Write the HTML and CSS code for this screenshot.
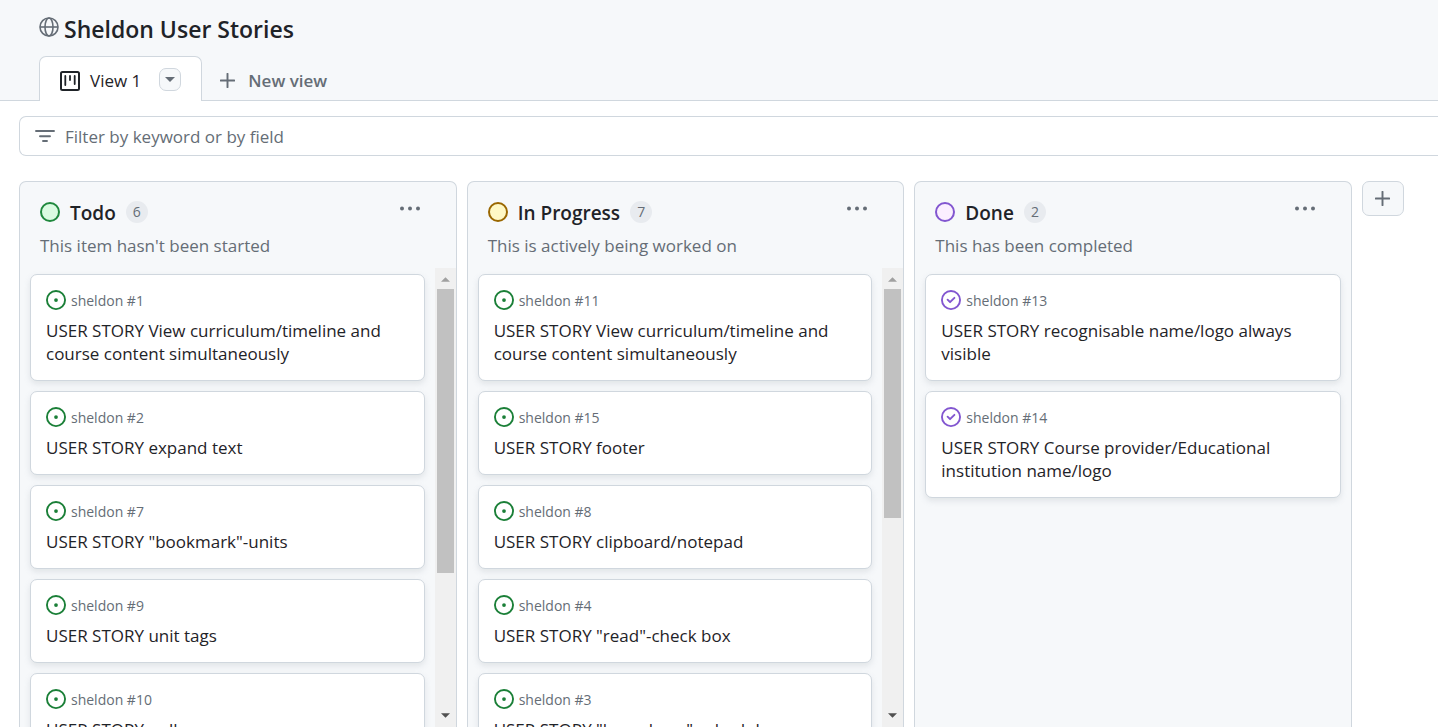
FILE: index.html
```html
<!DOCTYPE html>
<html lang="en">
<head>
<meta charset="utf-8">
<title>Sheldon User Stories</title>
<link rel="stylesheet" href="styles.css">
</head>
<body>
<svg class="sprite" aria-hidden="true">
  <symbol id="open" viewBox="0 0 16 16"><path d="M8 9.5a1.5 1.5 0 1 0 0-3 1.5 1.5 0 0 0 0 3Z"/><path d="M8 0a8 8 0 1 1 0 16A8 8 0 0 1 8 0ZM1.5 8a6.500 6.500 0 1 0 13 0 6.500 6.500 0 0 0-13 0Z"/></symbol>
  <symbol id="closed" viewBox="0 0 16 16"><path d="M11.280 6.780a.75.75 0 0 0-1.060-1.060L7.250 8.690 5.780 7.220a.75.75 0 0 0-1.060 1.060l2 2a.75.75 0 0 0 1.060 0l3.500-3.500Z"/><path d="M16 8A8 8 0 1 1 0 8a8 8 0 0 1 16 0Zm-1.500 0a6.500 6.500 0 1 0-13 0 6.500 6.500 0 0 0 13 0Z"/></symbol>
  <symbol id="dots" viewBox="0 0 22 4"><circle cx="2" cy="2" r="2"/><circle cx="10" cy="2" r="2"/><circle cx="18" cy="2" r="2"/></symbol>
  <symbol id="plus" viewBox="0 0 14 14"><path d="M7 0.750V13.250M0.750 7H13.250" fill="none" stroke="currentColor" stroke-width="1.800" stroke-linecap="round"/></symbol>
  <symbol id="up" viewBox="0 0 10 5"><path d="M0 5 5 0l5 5Z"/></symbol>
  <symbol id="down" viewBox="0 0 10 5"><path d="M0 0h10L5 5Z"/></symbol>
</svg>
<header class="header">
  <div class="heading">
    <svg class="icon-20" viewBox="0 0 20 20" fill="none" stroke="currentColor" stroke-width="1.600"><circle cx="10" cy="10" r="9"/><ellipse cx="10" cy="10" rx="4" ry="9"/><path d="M1 10h18"/></svg>
    <h1 class="title">Sheldon User Stories</h1>
  </div>
  <nav class="tabs">
    <div class="tab">
      <svg class="icon-20 tab-icon" viewBox="0 0 20 20" fill="none" stroke="currentColor"><rect x="1" y="1" width="18" height="18" rx="1.500" stroke-width="2"/><path d="M5.300 5v9M10 5v4M14.700 5v8" stroke-width="1.800" stroke-linecap="round"/></svg>
      <a class="tab-link" href="#view-1">View 1</a>
      <button class="tab-menu" type="button" aria-label="View options"><svg class="caret"><use href="#down"/></svg></button>
    </div>
    <button class="new-view" type="button"><svg class="plus"><use href="#plus"/></svg>New view</button>
  </nav>
</header>
<main class="main">
  <label class="filter">
    <svg class="icon-filter" viewBox="0 0 20 12" fill="none" stroke="currentColor" stroke-width="1.900" stroke-linecap="round"><path d="M1 1h18M5 6.200h10M8 11h4"/></svg>
    <input class="filter-input" type="text" placeholder="Filter by keyword or by field" aria-label="Filter by keyword or by field">
  </label>
  <div class="board">
    <section class="column">
      <div class="column-head">
        <span class="dot dot-green"></span><h2 class="column-title">Todo</h2><span class="count">6</span>
        <button class="more" type="button" aria-label="Todo options"><svg class="dots"><use href="#dots"/></svg></button>
      </div>
      <p class="column-note">This item hasn't been started</p>
      <div class="column-body">
        <div class="cards">
          <article class="card"><div class="ref"><svg class="icon-20 open"><use href="#open"/></svg>sheldon #1</div><a class="card-title" href="#1">USER STORY View curriculum/timeline and course content simultaneously</a></article>
          <article class="card"><div class="ref"><svg class="icon-20 open"><use href="#open"/></svg>sheldon #2</div><a class="card-title" href="#2">USER STORY expand text</a></article>
          <article class="card"><div class="ref"><svg class="icon-20 open"><use href="#open"/></svg>sheldon #7</div><a class="card-title" href="#7">USER STORY "bookmark"-units</a></article>
          <article class="card"><div class="ref"><svg class="icon-20 open"><use href="#open"/></svg>sheldon #9</div><a class="card-title" href="#9">USER STORY unit tags</a></article>
          <article class="card"><div class="ref"><svg class="icon-20 open"><use href="#open"/></svg>sheldon #10</div><a class="card-title" href="#10">USER STORY poll</a></article>
        </div>
        <div class="scrollbar"><svg class="arrow arrow-up"><use href="#up"/></svg><div class="track"><div class="thumb thumb-long"></div></div><svg class="arrow"><use href="#down"/></svg></div>
      </div>
    </section>
    <section class="column">
      <div class="column-head">
        <span class="dot dot-yellow"></span><h2 class="column-title">In Progress</h2><span class="count">7</span>
        <button class="more" type="button" aria-label="In Progress options"><svg class="dots"><use href="#dots"/></svg></button>
      </div>
      <p class="column-note">This is actively being worked on</p>
      <div class="column-body">
        <div class="cards">
          <article class="card"><div class="ref"><svg class="icon-20 open"><use href="#open"/></svg>sheldon #11</div><a class="card-title" href="#11">USER STORY View curriculum/timeline and course content simultaneously</a></article>
          <article class="card"><div class="ref"><svg class="icon-20 open"><use href="#open"/></svg>sheldon #15</div><a class="card-title" href="#15">USER STORY footer</a></article>
          <article class="card"><div class="ref"><svg class="icon-20 open"><use href="#open"/></svg>sheldon #8</div><a class="card-title" href="#8">USER STORY clipboard/notepad</a></article>
          <article class="card"><div class="ref"><svg class="icon-20 open"><use href="#open"/></svg>sheldon #4</div><a class="card-title" href="#4">USER STORY "read"-check box</a></article>
          <article class="card"><div class="ref"><svg class="icon-20 open"><use href="#open"/></svg>sheldon #3</div><a class="card-title" href="#3">USER STORY "homebase"-schedule</a></article>
        </div>
        <div class="scrollbar"><svg class="arrow arrow-up"><use href="#up"/></svg><div class="track"><div class="thumb thumb-short"></div></div><svg class="arrow"><use href="#down"/></svg></div>
      </div>
    </section>
    <section class="column">
      <div class="column-head">
        <span class="dot dot-purple"></span><h2 class="column-title">Done</h2><span class="count">2</span>
        <button class="more" type="button" aria-label="Done options"><svg class="dots"><use href="#dots"/></svg></button>
      </div>
      <p class="column-note">This has been completed</p>
      <div class="column-body">
        <div class="cards">
          <article class="card"><div class="ref"><svg class="icon-20 closed"><use href="#closed"/></svg>sheldon #13</div><a class="card-title" href="#13">USER STORY recognisable name/logo always visible</a></article>
          <article class="card"><div class="ref"><svg class="icon-20 closed"><use href="#closed"/></svg>sheldon #14</div><a class="card-title" href="#14">USER STORY Course provider/Educational institution name/logo</a></article>
        </div>
      </div>
    </section>
    <button class="add-column" type="button" aria-label="Add column"><svg class="plus"><use href="#plus"/></svg></button>
  </div>
</main>
</body>
</html>
```
FILE: styles.css
```css
* { box-sizing: border-box; }
body {
  margin: 0;
  height: 100vh;
  display: flex;
  flex-direction: column;
  overflow: hidden;
  background: #fff;
  color: #1f2328;
  font: 17px/23px "Segoe UI", "Open Sans", "Noto Sans", sans-serif;
}
svg { display: block; flex: none; fill: currentColor; }
svg[fill="none"] { fill: none; }
.sprite { display: none; }
button { font: inherit; color: #656d76; cursor: pointer; padding: 0; }
h1, h2, p { margin: 0; }
.icon-20 { width: 20px; height: 20px; }
.plus { width: 15px; height: 15px; }

.header {
  background: #f6f8fa;
  padding: 0 39px;
  border-bottom: 1px solid #d0d7de;
}
.heading {
  display: flex;
  align-items: center;
  gap: 5px;
  height: 56px;
  padding-bottom: 2px;
  color: #656d76;
}
.title { padding-top: 3px; font-size: 23px; line-height: 32px; font-weight: 600; color: #1f2328; }
.tabs { display: flex; margin-bottom: -1px; }
.tab {
  display: flex;
  align-items: center;
  height: 45px;
  padding: 0 20px;
  background: #fff;
  border: 1px solid #d0d7de;
  border-bottom: 0;
  border-radius: 7px 7px 0 0;
}
.tab-icon { margin-top: 4px; }
.tab-link { margin: 2px 18px 0 10px; color: inherit; text-decoration: none; }
.tab-menu {
  display: grid;
  place-items: center;
  width: 22px;
  height: 23px;
  background: #f6f8fa;
  border: 1px solid #d0d7de;
  border-radius: 7px;
}
.caret { width: 10px; height: 5px; }
.new-view {
  display: flex;
  align-items: center;
  gap: 13px;
  padding: 3px 0 0 18px;
  border: 0;
  background: none;
  font-weight: 600;
}

.main { flex: 1; min-height: 0; display: flex; flex-direction: column; gap: 25px; padding: 15px 0 1px; }
.filter {
  display: flex;
  align-items: center;
  gap: 10px;
  height: 40px;
  flex: none;
  margin-left: 19px;
  padding-left: 15px;
  border: 1px solid #d0d7de;
  border-right: 0;
  border-radius: 7px 0 0 7px;
  color: #656d76;
}
.icon-filter { width: 20px; height: 12px; }
.filter-input { flex: 1; border: 0; padding: 0; outline: 0; font: inherit; background: none; }
.filter-input::placeholder { color: #656d76; opacity: 1; }

.board {
  flex: 1;
  min-height: 0;
  display: grid;
  grid-template-columns: repeat(3, minmax(0, 1fr)) 42px;
  grid-template-rows: minmax(0, 1fr);
  gap: 10px;
  padding: 0 34px 0 19px;
}
.column {
  display: flex;
  flex-direction: column;
  background: #f6f8fa;
  border: 1px solid #d0d7de;
  border-bottom: 0;
  border-radius: 7px 7px 0 0;
}
.column-head { display: flex; align-items: center; height: 42px; padding: 18px 34px 0 20px; }
.dot { width: 20px; height: 20px; border: 2px solid; border-radius: 50%; }
.dot-green { border-color: #1f883d; background: #dafbe1; }
.dot-yellow { border-color: #9a6700; background: #fff8c5; }
.dot-purple { border-color: #8256d0; background: #fbefff; }
.column-title { margin: 2px 10px 0; font-size: 19px; line-height: 24px; font-weight: 600; }
.count {
  padding: 0 7px;
  background: #e8ebef;
  border-radius: 11px;
  font-size: 14px;
  line-height: 22px;
  color: #656d76;
}
.more { height: 20px; margin: -7px 0 0 auto; border: 0; background: none; }
.dots { width: 22px; height: 5px; }
.column-note { padding: 10px 20px 11px; color: #656d76; }
.column-body { flex: 1; min-height: 0; display: flex; }
.cards {
  flex: 1;
  min-width: 0;
  display: flex;
  flex-direction: column;
  gap: 10px;
  padding: 6px 10px 0;
  overflow: hidden;
}
.card {
  flex: none;
  padding: 11px 15px 14px;
  background: #fff;
  border: 1px solid #d0d7de;
  border-radius: 7px;
  box-shadow: 0 3px 6px rgba(140, 149, 159, 0.2);
}
.ref { display: flex; align-items: center; gap: 5px; height: 28px; margin-bottom: 5px; font-size: 14px; color: #656d76; }
.card-title { display: block; padding-bottom: 1px; color: inherit; text-decoration: none; }
.open { color: #1a7f37; }
.closed { color: #8256d0; }
.scrollbar {
  flex: none;
  display: flex;
  flex-direction: column;
  align-items: center;
  width: 21px;
  padding: 9px 0;
  background: #f0f0f0;
  color: #505050;
}
.arrow { width: 9px; height: 5px; }
.arrow-up { color: #a0a0a0; }
.track { flex: 1; width: 17px; padding: 7px 0; }
.thumb { background: #c1c1c1; }
.thumb-long { height: 68%; }
.thumb-short { height: 55%; }
.add-column {
  display: grid;
  place-items: center;
  height: 35px;
  background: #f6f8fa;
  border: 1px solid #d0d7de;
  border-radius: 7px;
}
```
